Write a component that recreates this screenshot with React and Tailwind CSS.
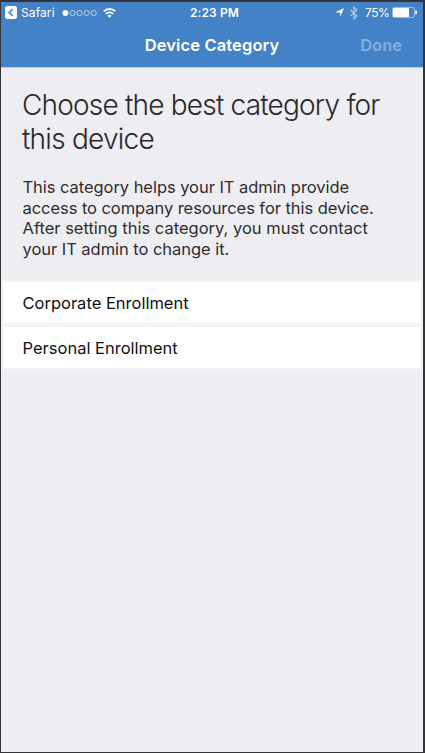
function StatusBar() {
  return (
    <div className="flex h-[21px] items-center justify-between pl-1 pr-[6px] text-[12px] leading-[20px] text-white">
      <div className="flex w-[150px] items-center">
        <svg width="12" height="13" viewBox="0 0 12 13" className="shrink-0">
          <rect width="12" height="13" rx="2.5" fill="white" />
          <path d="M7.8 3.2 4.2 6.5l3.6 3.3" fill="none" stroke="#4382c6" strokeWidth="1.6" />
        </svg>
        <span className="ml-1 w-[34px] whitespace-nowrap tracking-[0.1px]">Safari</span>
        <svg width="36" height="8" viewBox="0 0 36 8" className="ml-[7px] shrink-0">
          <circle cx="3.4" cy="4" r="2.9" fill="white" />
          <g fill="none" stroke="white" strokeOpacity="0.75" strokeWidth="0.8">
            <circle cx="10.6" cy="4" r="2.6" />
            <circle cx="17.6" cy="4" r="2.6" />
            <circle cx="24.7" cy="4" r="2.6" />
            <circle cx="31.7" cy="4" r="2.6" />
          </g>
        </svg>
        <svg width="13" height="10" viewBox="0 0 13 10" className="ml-[5px] shrink-0">
          <g fill="none" stroke="white" strokeWidth="1.8">
            <path d="M0.7 3.4a8.2 8.2 0 0 1 11.6 0" />
            <path d="M2.9 5.9a5.1 5.1 0 0 1 7.2 0" />
          </g>
          <path d="M6.5 9.8 4.4 7.7a3 3 0 0 1 4.2 0z" fill="white" />
        </svg>
      </div>
      <span className="whitespace-nowrap pl-[7px] text-[12px] font-semibold tracking-[0.1px]">2:23 PM</span>
      <div className="flex w-[150px] items-center justify-end">
        <svg width="9" height="9" viewBox="0 0 9 9">
          <path d="M9 0 5.2 9V4.6H0z" fill="white" />
        </svg>
        <svg width="8" height="14" viewBox="0 0 8 14" className="ml-[6px]">
          <path d="M0.6 4 7 10 4 13V1l3 3-6.4 6" fill="none" stroke="white" strokeOpacity="0.6" strokeWidth="1.1" />
        </svg>
        <span className="ml-[7px] w-[24px] whitespace-nowrap tracking-[-0.5px]">75%</span>
        <svg width="25" height="11" viewBox="0 0 25 11" className="ml-[3px]">
          <rect x="0.5" y="0.5" width="22" height="10" rx="2" fill="none" stroke="white" strokeOpacity="0.6" strokeWidth="0.8" />
          <path d="M2 1h15v9H2a1 1 0 0 1-1-1V2a1 1 0 0 1 1-1z" fill="white" />
          <path d="M23.3 3.5a2 2 0 0 1 0 4z" fill="white" />
        </svg>
      </div>
    </div>
  );
}

function NavBar() {
  return (
    <div className="grid h-11 grid-cols-[1fr_auto_1fr] items-center text-[16.5px] font-semibold leading-[22px]">
      <span />
      <h1 className="whitespace-nowrap tracking-[0.12px] text-white">Device Category</h1>
      <span className="pr-[21px] text-right text-[#83b1de]">Done</span>
    </div>
  );
}

const categories = ["Corporate Enrollment", "Personal Enrollment"];

export default function App() {
  return (
    <div className="flex h-[753px] w-[425px] flex-col border-b border-l border-r-2 border-t-2 border-[#343436] bg-[#eeedf2] font-['Inter','Liberation_Sans',sans-serif]">
      <header className="h-[66px] shrink-0 border-b border-[#bdcbe2] bg-[#4382c6]">
        <StatusBar />
        <NavBar />
      </header>
      <main>
        <h2 className="pl-[21px] pt-5 text-[28px] font-light leading-[34px] text-[#29292c]">
          <span className="block whitespace-nowrap tracking-[-0.8px]">Choose the best category for</span>
          <span className="block whitespace-nowrap tracking-[-0.75px]">this device</span>
        </h2>
        <p className="pl-[21.5px] pt-[21px] text-[16.5px] leading-[20.7px] text-[#2d2d30]">
          <span className="block whitespace-nowrap tracking-[-0.05px]">This category helps your IT admin provide</span>
          <span className="block whitespace-nowrap tracking-[-0.06px]">access to company resources for this device.</span>
          <span className="block whitespace-nowrap">After setting this category, you must contact</span>
          <span className="block whitespace-nowrap tracking-[-0.04px]">your IT admin to change it.</span>
        </p>
        <ul className="mt-5 flex flex-col gap-1 border-2 border-[#f2f2f2] bg-[#f2f2f2]">
          {categories.map((name) => (
            <li key={name} className="flex h-[41px] items-center bg-white pl-[19.5px] pt-0.5 text-[16.5px] text-[#111]">
              {name}
            </li>
          ))}
        </ul>
      </main>
    </div>
  );
}
